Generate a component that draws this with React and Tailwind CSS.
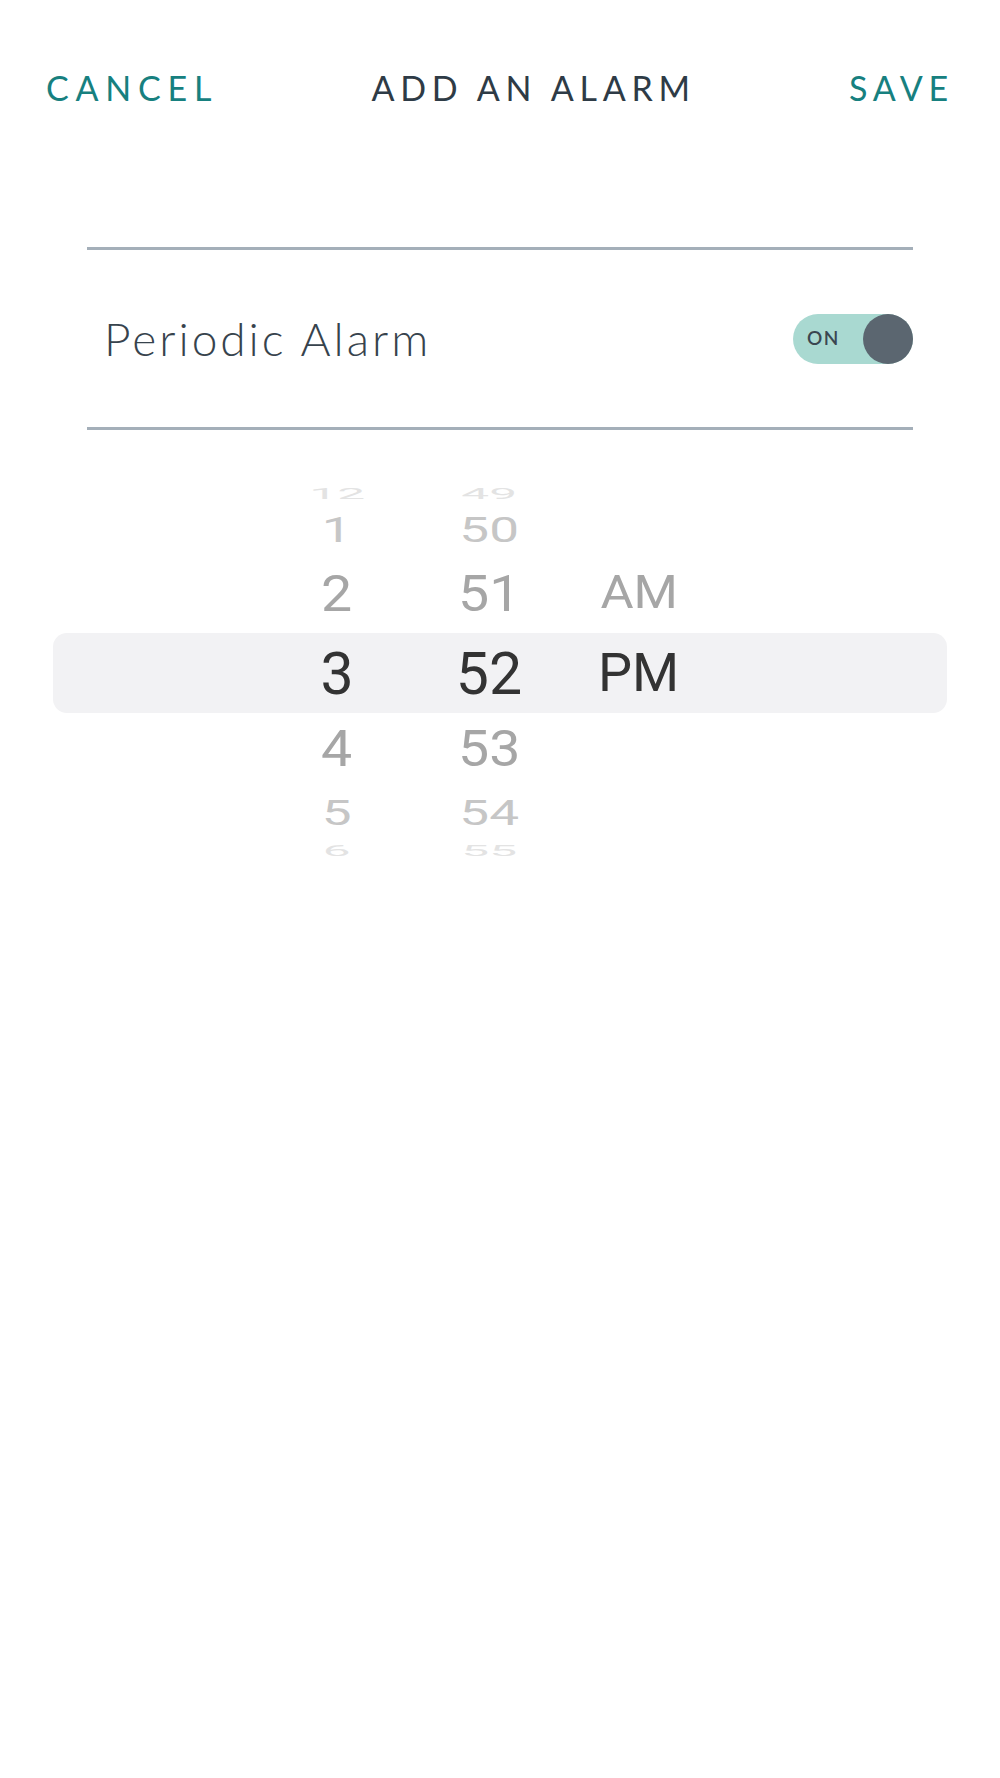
import React from "react";

/* ---------- Picker data ---------- */
const rows = [
  { h: "12", m: "49", p: "", height: "h-[24px]", tone: "text-[#e3e3e3]", sx: "scale-x-[0.84]", sy: "scale-y-[0.25]" },
  { h: "1", m: "50", p: "", height: "h-[48px]", tone: "text-[#c6c6c6]", sx: "scale-x-[0.9]", sy: "scale-y-[0.6]" },
  { h: "2", m: "51", p: "AM", height: "h-[80px]", tone: "text-[#a6a6a6]", sx: "scale-x-[0.94]", sy: "scale-y-[0.86]" },
  { h: "3", m: "52", p: "PM", height: "h-[80px]", tone: "text-[#333333]", sx: "scale-x-100", sy: "scale-y-100", active: true },
  { h: "4", m: "53", p: "", height: "h-[70px]", tone: "text-[#a6a6a6]", sx: "scale-x-[0.94]", sy: "scale-y-[0.86]" },
  { h: "5", m: "54", p: "", height: "h-[58px]", tone: "text-[#c6c6c6]", sx: "scale-x-[0.9]", sy: "scale-y-[0.6]" },
  { h: "6", m: "55", p: "", height: "h-[18px]", tone: "text-[#e3e3e3]", sx: "scale-x-[0.84]", sy: "scale-y-[0.25]" },
];

const Cell = ({ children, className, sx, sy }) => (
  <div className={className}>
    <span className={`inline-block ${sx} ${sy}`}>{children}</span>
  </div>
);

const PickerRow = ({ row }) => (
  <div
    className={`mx-[53px] flex items-center overflow-hidden pl-[234px] ${row.height} ${
      row.active ? "rounded-[14px] bg-[#f2f2f4]" : ""
    } ${row.tone}`}
  >
    <Cell className="w-[100px] text-center" sx={row.sx} sy={row.sy}>
      {row.h}
    </Cell>
    <Cell className="ml-[52px] w-[100px] text-center" sx={row.sx} sy={row.sy}>
      {row.m}
    </Cell>
    <Cell className="ml-[59px] text-left text-[54px]" sx={row.sx} sy={row.sy}>
      {row.p}
    </Cell>
  </div>
);

export default function App() {
  return (
    <div className="min-h-[1778px] w-full bg-white font-['Lato','Open_Sans',sans-serif]">
      {/* Header */}
      <div className="flex items-center justify-between px-[46px] pt-[64px]">
        <button className="text-[34px] leading-[48px] tracking-[0.2em] text-[#17807f]">
          CANCEL
        </button>
        <h1 className="text-[34px] leading-[48px] tracking-[0.17em] text-[#2e3b46]">
          ADD AN ALARM
        </h1>
        <button className="text-[34px] leading-[48px] tracking-[0.17em] text-[#17807f]">
          SAVE
        </button>
      </div>

      {/* Periodic toggle */}
      <div className="mx-[87px] mt-[135px] flex h-[183px] items-center justify-between border-y-[3px] border-[#a4afb9] pl-[17px]">
        <span className="text-[46px] font-light tracking-[0.065em] text-[#37434d]">Periodic Alarm</span>
        <div className="flex h-[50px] w-[120px] items-center justify-between rounded-full bg-[#a9d9d1] pl-[14px]">
          <span className="text-[19px] font-semibold tracking-[0.08em] text-[#3a4650]">ON</span>
          <div className="h-[50px] w-[50px] rounded-full bg-[#5b6670]" />
        </div>
      </div>

      {/* Time wheel */}
      <div className="mt-[51px] font-['Roboto','Liberation_Sans',sans-serif] text-[59px] leading-none">
        {rows.map((row, i) => (
          <PickerRow key={i} row={row} />
        ))}
      </div>
    </div>
  );
}
